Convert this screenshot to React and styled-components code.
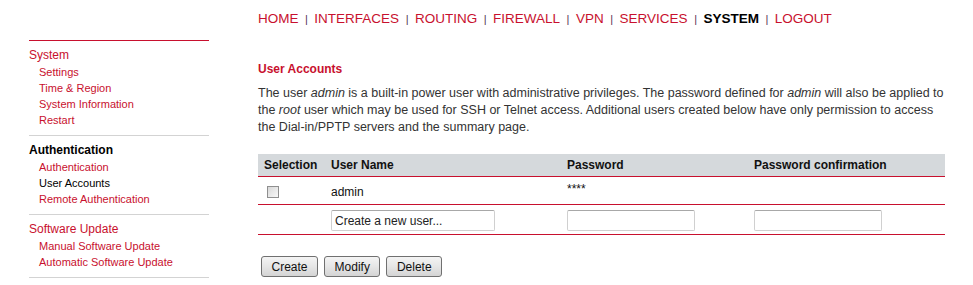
import React from 'react';
import styled, { createGlobalStyle } from 'styled-components';

const Global = createGlobalStyle`
  html, body {
    margin: 0;
    padding: 0;
    background: #fff;
    font-family: 'Liberation Sans', Arial, sans-serif;
  }
`;

const RED = '#c8102e';

const Page = styled.div`
  display: flex;
  align-items: flex-start;
  width: 973px;
  height: 285px;
  overflow: hidden;
`;

const Sidebar = styled.nav`
  width: 180px;
  margin: 40px 0 0 29px;
  border-top: 1px solid ${RED};
`;

const Group = styled.div`
  padding: 6px 0 7px;
  border-bottom: 1px solid #d3d3d3;
`;

const GroupTitle = styled.div`
  font-size: 12px;
  line-height: 17px;
  color: ${({ active }) => (active ? '#000' : RED)};
  font-weight: ${({ active }) => (active ? 'bold' : 'normal')};
`;

const SideLink = styled.a`
  display: block;
  padding-left: 10px;
  font-size: 11px;
  line-height: 16px;
  color: ${({ active }) => (active ? '#000' : RED)};
  text-decoration: none;
`;

const Main = styled.div`
  margin-left: 49px;
  flex: 1;
  padding-right: 28px;
`;

const TopNav = styled.div`
  display: flex;
  align-items: baseline;
  margin-top: 10px;
  font-size: 13.5px;
  line-height: 17px;
`;

const NavItem = styled.a`
  color: ${({ active }) => (active ? '#000' : RED)};
  font-weight: ${({ active }) => (active ? 'bold' : 'normal')};
  text-decoration: none;
`;

const Sep = styled.span`
  color: #553355;
  font-size: 11px;
  margin: 0 6.5px;
`;

const Heading = styled.h2`
  margin: 33px 0 8px;
  font-size: 12px;
  line-height: 16px;
  font-weight: bold;
  color: ${RED};
`;

const Intro = styled.p`
  margin: 0;
  font-size: 12.5px;
  line-height: 17px;
  color: #333;
`;

const Table = styled.div`
  margin-top: 18px;
  display: grid;
  grid-template-columns: 67px 236px 187px 1fr;
`;

const HeadCell = styled.div`
  background: #d5d9dc;
  font-size: 12px;
  font-weight: bold;
  color: #111;
  height: 22px;
  line-height: 22px;
  padding-left: 6px;
  border-bottom: 1px solid ${RED};
`;

const Cell = styled.div`
  font-size: 12px;
  color: #111;
  height: ${({ h }) => h}px;
  display: flex;
  align-items: ${({ top }) => (top ? 'flex-start' : 'center')};
  padding: ${({ top }) => (top ? '5px' : '2px')} 0 0 6px;
  box-sizing: border-box;
  border-bottom: 1px solid ${RED};
`;

const Check = styled.span`
  display: inline-block;
  width: 10px;
  height: 10px;
  margin-left: 3px;
  border: 1px solid #8f8f8f;
  background: linear-gradient(135deg, #d8d8d8, #f8f8f8);
`;

const Input = styled.input`
  box-sizing: border-box;
  width: ${({ w }) => w}px;
  height: 21px;
  border: 1px solid #d0d0d0;
  border-top-color: #a8a8a8;
  border-radius: 2px;
  padding: 0 3px;
  font-family: 'Liberation Sans', Arial, sans-serif;
  font-size: 12px;
  color: #222;
  outline: none;
  &::placeholder {
    color: #222;
  }
`;

const Buttons = styled.div`
  display: flex;
  gap: 6px;
  margin-top: 21px;
  padding-left: 3px;
`;

const Button = styled.button`
  height: 21px;
  padding: 0 9.5px;
  border: 1px solid #707070;
  border-radius: 3px;
  background: linear-gradient(#f4f4f4, #e6e6e6 50%, #d4d4d4);
  font-family: 'Liberation Sans', Arial, sans-serif;
  font-size: 12px;
  color: #111;
`;

const nav = ['HOME', 'INTERFACES', 'ROUTING', 'FIREWALL', 'VPN', 'SERVICES', 'SYSTEM', 'LOGOUT'];

const groups = [
  { title: 'System', links: ['Settings', 'Time & Region', 'System Information', 'Restart'] },
  { title: 'Authentication', active: true, links: ['Authentication', 'User Accounts', 'Remote Authentication'] },
  { title: 'Software Update', links: ['Manual Software Update', 'Automatic Software Update'] },
];

export default function App() {
  return (
    <Page>
      <Global />
      <Sidebar>
        {groups.map((g) => (
          <Group key={g.title}>
            <GroupTitle active={g.active}>{g.title}</GroupTitle>
            {g.links.map((l) => (
              <SideLink key={l} href="#" active={l === 'User Accounts'}>
                {l}
              </SideLink>
            ))}
          </Group>
        ))}
      </Sidebar>
      <Main>
        <TopNav>
          {nav.map((n, i) => (
            <React.Fragment key={n}>
              {i > 0 && <Sep>|</Sep>}
              <NavItem href="#" active={n === 'SYSTEM'}>
                {n}
              </NavItem>
            </React.Fragment>
          ))}
        </TopNav>
        <Heading>User Accounts</Heading>
        <Intro>
          The user <i>admin</i> is a built-in power user with administrative privileges. The password
          defined for <i>admin</i> will also be applied to the <i>root</i> user which may be used for SSH
          or Telnet access. Additional users created below have only permission to access the
          Dial-in/PPTP servers and the summary page.
        </Intro>
        <Table>
          <HeadCell>Selection</HeadCell>
          <HeadCell>User Name</HeadCell>
          <HeadCell>Password</HeadCell>
          <HeadCell>Password confirmation</HeadCell>

          <Cell h={28}>
            <Check />
          </Cell>
          <Cell h={28}>admin</Cell>
          <Cell h={28} top>
            ****
          </Cell>
          <Cell h={28} />

          <Cell h={30} />
          <Cell h={30}>
            <Input w={164} placeholder="Create a new user..." />
          </Cell>
          <Cell h={30}>
            <Input w={128} type="password" />
          </Cell>
          <Cell h={30}>
            <Input w={128} type="password" />
          </Cell>
        </Table>
        <Buttons>
          <Button>Create</Button>
          <Button>Modify</Button>
          <Button>Delete</Button>
        </Buttons>
      </Main>
    </Page>
  );
}
